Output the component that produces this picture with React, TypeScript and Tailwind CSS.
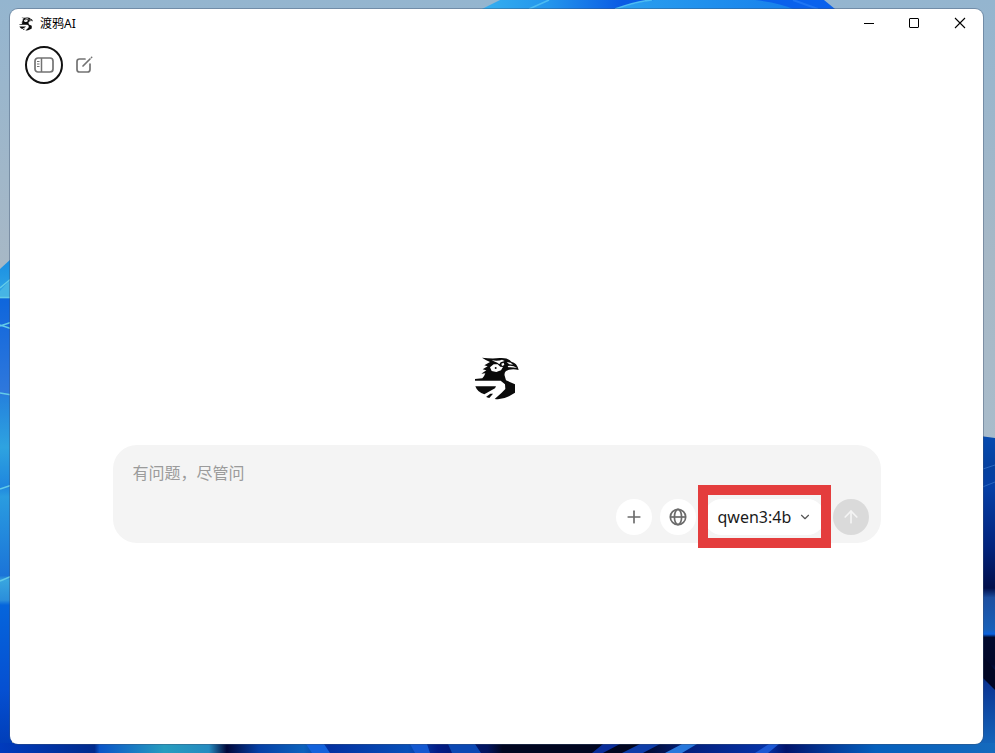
import type { SVGProps } from "react"
import { ArrowUp, ChevronDown, Plus } from "lucide-react"

const PROMPT_HINT = "有问题\uff0c尽管问"

function Wallpaper() {
  return (
    <svg
      className="absolute inset-0 -z-10 h-full w-full"
      viewBox="0 0 995 753"
      preserveAspectRatio="none"
      aria-hidden="true"
    >
      <defs>
        <linearGradient id="sky" x1="0" y1="0" x2="0" y2="1">
          <stop offset="0" stopColor="#94b5cf" />
          <stop offset="0.35" stopColor="#a7b8c6" />
          <stop offset="0.6" stopColor="#a9bccb" />
        </linearGradient>
        <linearGradient id="crest" x1="480" x2="835" y1="0" y2="0" gradientUnits="userSpaceOnUse">
          <stop offset="0" stopColor="#35b0f0" />
          <stop offset="0.2" stopColor="#2394ec" />
          <stop offset="0.4" stopColor="#0a5be4" />
          <stop offset="1" stopColor="#0a62ee" />
        </linearGradient>
        <linearGradient id="crestInner" x1="615" x2="795" y1="0" y2="0" gradientUnits="userSpaceOnUse">
          <stop offset="0" stopColor="#2ba0ee" />
          <stop offset="1" stopColor="#1780ec" />
        </linearGradient>
        <linearGradient id="left" x1="0" x2="0" y1="260" y2="753" gradientUnits="userSpaceOnUse">
          <stop offset="0" stopColor="#1a8ee2" />
          <stop offset="0.07" stopColor="#2fa5e6" />
          <stop offset="0.08" stopColor="#0f66dc" />
          <stop offset="0.27" stopColor="#2f78dc" />
          <stop offset="0.28" stopColor="#2583dd" />
          <stop offset="0.38" stopColor="#2ea3e0" />
          <stop offset="0.46" stopColor="#1f86de" />
          <stop offset="0.48" stopColor="#2a9ce0" />
          <stop offset="0.64" stopColor="#1b74d8" />
          <stop offset="0.65" stopColor="#38a5df" />
          <stop offset="0.69" stopColor="#2b8edb" />
          <stop offset="0.7" stopColor="#0565dc" />
          <stop offset="0.87" stopColor="#0550d2" />
          <stop offset="1" stopColor="#003bb5" />
        </linearGradient>
        <linearGradient id="right" x1="0" x2="0" y1="436" y2="753" gradientUnits="userSpaceOnUse">
          <stop offset="0" stopColor="#064ab0" />
          <stop offset="0.1" stopColor="#06419f" />
          <stop offset="0.16" stopColor="#063fa6" />
          <stop offset="0.35" stopColor="#02237d" />
          <stop offset="0.48" stopColor="#010f4b" />
          <stop offset="0.51" stopColor="#1d4fa0" />
          <stop offset="0.61" stopColor="#1860b8" />
          <stop offset="0.625" stopColor="#0a62e0" />
          <stop offset="0.635" stopColor="#010a2e" />
          <stop offset="0.72" stopColor="#01072a" />
          <stop offset="0.78" stopColor="#0b3593" />
          <stop offset="1" stopColor="#166cc0" />
        </linearGradient>
        <linearGradient id="floor" x1="0" x2="995" y1="0" y2="0" gradientUnits="userSpaceOnUse">
          <stop offset="0" stopColor="#003bbd" />
          <stop offset="0.095" stopColor="#012b8d" />
          <stop offset="0.1" stopColor="#0a55c8" />
          <stop offset="0.165" stopColor="#279dbf" />
          <stop offset="0.21" stopColor="#258bc0" />
          <stop offset="0.228" stopColor="#01083a" />
          <stop offset="0.26" stopColor="#0540a6" />
          <stop offset="0.305" stopColor="#0c62bd" />
          <stop offset="0.33" stopColor="#0330a0" />
          <stop offset="0.41" stopColor="#0750b9" />
          <stop offset="0.44" stopColor="#021c86" />
          <stop offset="0.49" stopColor="#02145e" />
          <stop offset="0.505" stopColor="#010620" />
          <stop offset="0.64" stopColor="#010620" />
          <stop offset="0.69" stopColor="#031f7c" />
          <stop offset="0.77" stopColor="#0633a8" />
          <stop offset="0.79" stopColor="#01146c" />
          <stop offset="0.84" stopColor="#03409f" />
          <stop offset="0.88" stopColor="#0560bd" />
          <stop offset="1" stopColor="#156abd" />
        </linearGradient>
      </defs>
      <rect width="995" height="753" fill="url(#sky)" />

      <path d="M482 9Q492 4 500 0H824L835 9V12H482Z" fill="url(#crest)" />
      <path d="M616 9Q640 1 654 0H755Q780 3 793 9Z" fill="url(#crestInner)" />
      <path d="M529 9 549 0M615 9Q638 1 652 0" stroke="#4dbcf2" strokeWidth="1.5" fill="none" />
      <path d="M793 0 818 9" stroke="#1e74f3" strokeWidth="2" />

      <path d="M0 269 12 258V753H0Z" fill="url(#left)" />
      <path d="M0 291Q6 284 12 279V298H0Z" fill="#46b5e5" />
      <path
        d="M0 288 12 278M0 297.500H12M0 326 12 322M0 325 12 329M0 393 12 395M0 489 12 485M0 581 12 576"
        stroke="#63cbe8"
        strokeWidth="1.500"
        fill="none"
      />

      <path d="M980 436 995 438V753H980Z" fill="url(#right)" />
      <path d="M980 470 995 465M980 488 995 482" stroke="#2a67be" strokeWidth="1" />
      <path d="M983 657 995 670V690L983 678Z" fill="#010624" />

      <rect y="743" width="995" height="10" fill="url(#floor)" />
      <path d="M306 744H324L330 753H312Z" fill="#1362dc" />
      <path d="M410 744H427L430 753H415Z" fill="#1459d1" />
      <path d="M448 744H475L481 753H452Z" fill="#0b48b3" />
      <path d="M603 744H620L603 753H592Z" fill="#0a2d99" />
      <path d="M640 744H660L643 753H622Z" fill="#0e3da8" />
      <path d="M682 744H697L682 753H665Z" fill="#2878dc" />
      <path d="M769 744H779L768 753H755Z" fill="#1c58d4" />
    </svg>
  )
}

function RavenLogo(props: SVGProps<SVGSVGElement>) {
  return (
    <svg viewBox="27 34 135 135" aria-hidden="true" {...props}>
      <path
        fill="#0b0b0b"
        d="M51 39Q82 43 104 40Q128 38 139 51Q156 54 161 76Q147 72 132 75L123 79Q117 84 119 93L123 107L150 119V144L132 155Q112 166 89 163L110 144L121 133L120 119L107 108H30V103L52 101Q59 93 61 86L49 87L64 77L53 74L68 65L58 62L75 52Q65 48 51 39Z"
      />
      <path fill="#fff" d="M75 68 86 59 98 59 106 66 114 67 108 77 94 82 80 79Z" />
      <circle cx="92" cy="70" r="3" fill="#0b0b0b" />
      <path fill="#fff" d="M80 47Q101 50 111 45L119 49 107 53 103 59 97 54Z" />
      <path fill="#fff" d="M109 57 116 54 118 61 111 64Z" />
      <path fill="#fff" d="M125 53Q136 51 144 60L133 59ZM128 64Q143 61 156 70Q141 67 130 68Z" />
      <path fill="#0b0b0b" d="M31 125H93L90 131L58 149Q38 144 31 125Z" />
      <path fill="#0b0b0b" d="M66 155 76 147 84 147 73 160 65 158Z" />
    </svg>
  )
}

function SidebarIcon() {
  return (
    <svg className="h-4 w-5" viewBox="0 0 20 16" fill="none" stroke="#737373" aria-hidden="true">
      <rect x="1" y="1" width="18" height="14" rx="3" strokeWidth="1.7" />
      <path d="M7.500 1V15" strokeWidth="1.500" />
      <path d="M3 4.500H5.500M3 7H5.500M3 9.500H5.500" strokeWidth="1.200" />
    </svg>
  )
}

function ComposeIcon() {
  return (
    <svg
      className="size-[18px]"
      viewBox="0 0 18 18"
      fill="none"
      stroke="#737373"
      strokeWidth="1.700"
      strokeLinecap="round"
      aria-hidden="true"
    >
      <path d="M10 3H4.500Q2 3 2 5.500V13.500Q2 16 4.500 16H12.500Q15 16 15 13.500V8" />
      <path d="M8 10 15 3M16.500 1.500 16.600 1.400" />
    </svg>
  )
}

function GlobeIcon() {
  return (
    <svg
      className="size-[18px]"
      viewBox="0 0 18 18"
      fill="none"
      stroke="#6b6b6b"
      strokeWidth="1.700"
      aria-hidden="true"
    >
      <circle cx="9" cy="9" r="7.700" />
      <ellipse cx="9" cy="9" rx="3.600" ry="7.700" />
      <path d="M1.300 9H16.700" />
    </svg>
  )
}

function TitleBar() {
  return (
    <header className="flex h-7 items-center justify-between pl-[9px]">
      <div className="flex items-center gap-[7px] pt-0.5">
        <RavenLogo className="size-3.5" />
        <h1 className="text-xs">渡鸦AI</h1>
      </div>
      <div className="flex">
        <button type="button" aria-label="最小化" className="flex h-7 w-[45px] items-center justify-center">
          <svg className="size-3" viewBox="0 0 12 12" stroke="#000" aria-hidden="true">
            <path d="M1 6.500H11" />
          </svg>
        </button>
        <button type="button" aria-label="最大化" className="flex h-7 w-[45px] items-center justify-center">
          <svg className="size-3" viewBox="0 0 12 12" fill="none" stroke="#000" aria-hidden="true">
            <rect x="1.500" y="1.500" width="9" height="9" rx="0.500" />
          </svg>
        </button>
        <button type="button" aria-label="关闭" className="flex h-7 w-[47px] items-center justify-center">
          <svg className="size-3" viewBox="0 0 12 12" stroke="#000" strokeWidth="1.100" aria-hidden="true">
            <path d="M1 1 11 11M11 1 1 11" />
          </svg>
        </button>
      </div>
    </header>
  )
}

function Composer() {
  return (
    <form
      className="flex w-full max-w-3xl flex-col rounded-3xl bg-[#f4f4f4] pt-4 pr-3 pb-2 pl-5"
      onSubmit={(e) => e.preventDefault()}
    >
      <textarea
        aria-label={PROMPT_HINT}
        placeholder={PROMPT_HINT}
        rows={1}
        lang="zh-CN"
        className="block h-[38px] w-full resize-none bg-transparent text-base leading-6 outline-none placeholder:text-[#9b9b9b]"
      />
      <div className="flex items-center justify-end gap-2">
        <button
          type="button"
          aria-label="添加"
          className="flex size-9 items-center justify-center rounded-full bg-white text-[#6b6b6b]"
        >
          <Plus className="size-5" strokeWidth={2} />
        </button>
        <button
          type="button"
          aria-label="联网搜索"
          className="flex size-9 items-center justify-center rounded-full bg-white"
        >
          <GlobeIcon />
        </button>
        <div className="relative">
          <button
            type="button"
            aria-haspopup="listbox"
            className="flex h-9 w-[121px] items-center justify-between rounded-full bg-white pr-[13px] pl-3.5 text-base text-[#1a1a1a]"
          >
            qwen3:4b
            <ChevronDown className="size-3.5 text-[#555]" strokeWidth={2} />
          </button>
          <div className="pointer-events-none absolute -inset-x-1.5 -top-3.5 -bottom-[13px] border-10 border-[#e43d3d]" />
        </div>
        <button
          type="submit"
          aria-label="发送"
          className="flex size-9 items-center justify-center rounded-full bg-[#dadada] text-[#f4f4f4]"
        >
          <ArrowUp className="size-5" strokeWidth={2} />
        </button>
      </div>
    </form>
  )
}

export default function App() {
  return (
    <div className="relative isolate flex min-h-screen flex-col overflow-hidden pt-[9px] pr-3 pb-[9px] pl-2.5 font-['Noto_Sans','Noto_Sans_CJK_SC',sans-serif] text-black">
      <Wallpaper />
      <div className="flex flex-1 flex-col rounded-lg bg-white shadow-[0_0_0_1px_rgba(60,80,110,0.4)]">
        <TitleBar />
        <nav className="mt-[9px] flex items-center gap-3 pl-[15px]">
          <button
            type="button"
            aria-label="侧边栏"
            className="flex size-[38px] items-center justify-center rounded-full border-2 border-[#111]"
          >
            <SidebarIcon />
          </button>
          <button type="button" aria-label="新对话" className="flex size-[18px] items-center justify-center">
            <ComposeIcon />
          </button>
        </nav>
        <main className="flex flex-1 flex-col items-center justify-center gap-11 px-6 pt-[70px]">
          <RavenLogo className="size-[45px]" />
          <Composer />
        </main>
      </div>
    </div>
  )
}
